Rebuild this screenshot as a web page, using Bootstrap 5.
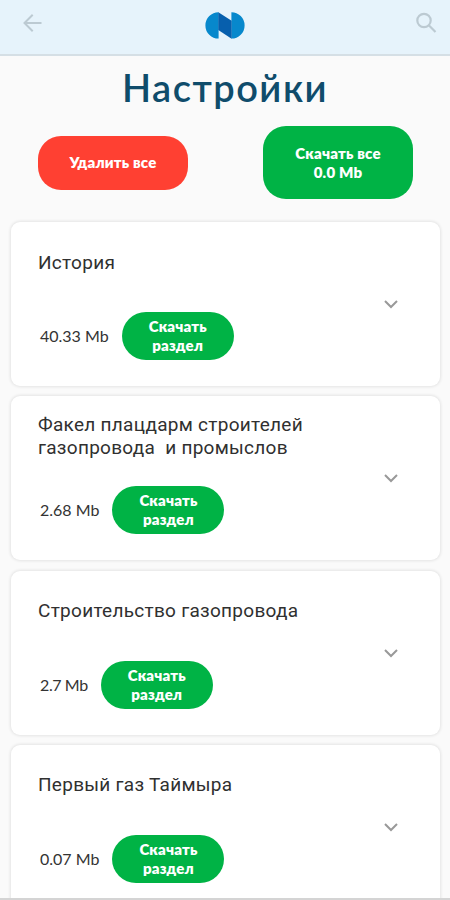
<!DOCTYPE html>
<html lang="ru">
<head>
<meta charset="utf-8">
<meta name="viewport" content="width=device-width, initial-scale=1">
<title>Настройки</title>
<link href="https://cdn.jsdelivr.net/npm/bootstrap@5.3.0/dist/css/bootstrap.min.css" rel="stylesheet">
<style>
body{background:#fafafa;font-family:Lato,"Open Sans",sans-serif;height:900px}
.app-screen{height:900px;border-bottom:2px solid #d4d4d4}
.app-bar{height:56px;background:#e6f3fb;border-bottom:2px solid #d5dfe5;padding:0 12px 0 20px}
.bar-icon{width:24px;height:24px;margin-bottom:9px;color:#bccad2}
.app-logo{width:40px;height:27px;margin-bottom:4px;margin-right:8px}
.page-title{font-size:38px;line-height:46px;font-weight:600;color:#0f4c6b;margin-top:8px;letter-spacing:1.5px}
.top-actions{height:73px;margin:16px 37px 23px 38px}
.pill{color:#fff!important;font-weight:800;font-size:15px;line-height:19px;border:0;padding:0}
.pill-all{width:150px;border-radius:23px;letter-spacing:.2px}
.pill-red{height:54px;background:#ff4032!important}
.pill-green{background:#00b345!important}
.pill-tall{height:73px}
.pill-section{width:112px;height:48px;border-radius:24px;letter-spacing:.15px}
.section-list{gap:10.3px;padding:0 10px}
.section-card{height:164px;border:0;border-radius:9px;box-shadow:0 0 3px 1px rgba(0,0,0,.09);padding:0 41px 26px 27px;margin:0 .5px 0 1px}
.section-name{font-family:Roboto,sans-serif;font-size:19px;line-height:23px;letter-spacing:.28px;color:#303030;height:62px;margin-bottom:19px;white-space:pre-line;font-weight:400}
.section-size{font-size:16px;color:#333;margin-left:2px;margin-right:13px;white-space:nowrap}
.size-short{letter-spacing:-.4px}
.chevron{width:16px;height:10px;color:#999;margin-top:26px}
</style>
</head>
<body>
<div class="app-screen overflow-hidden d-flex flex-column">
<header class="app-bar d-flex align-items-center justify-content-between flex-shrink-0">
<svg class="bar-icon" viewBox="0 0 24 24" fill="none" stroke="currentColor" stroke-width="2"><path d="M21.5 12H4.7M12.7 3.8 4.5 12l8.2 8.2"/></svg>
<svg class="app-logo" viewBox="0 0 40 27"><path d="M13.6.2A13.2 13.2 0 0 0 13.6 26.6zM26.4.2A13.2 13.2 0 0 1 26.4 26.6z" fill="#0788cc"/><path d="M13.3.2 26.6 8.8V26.7L13.3 18z" fill="#075fad"/></svg>
<svg class="bar-icon" viewBox="0 0 24 24" fill="none" stroke="currentColor" stroke-width="2.2"><circle cx="10" cy="9.5" r="6.7"/><path d="m14.8 14.3 6.7 6.7"/></svg>
</header>
<h1 class="page-title text-center mb-0 flex-shrink-0">Настройки</h1>
<div class="top-actions d-flex align-items-center justify-content-between flex-shrink-0">
<button class="btn pill pill-all pill-red">Удалить все</button>
<button class="btn pill pill-all pill-green pill-tall">Скачать все<br>0.0 Mb</button>
</div>
<main class="section-list d-flex flex-column">
<section class="card section-card flex-row align-items-end justify-content-between flex-shrink-0">
<div><h2 class="section-name d-flex align-items-center">История</h2>
<div class="d-flex align-items-center"><span class="section-size">40.33 Mb</span><button class="btn pill pill-section pill-green">Скачать<br>раздел</button></div></div>
<svg class="chevron align-self-center" viewBox="0 0 16 10" fill="none" stroke="currentColor" stroke-width="2"><path d="m2 2 6 6 6-6"/></svg>
</section>
<section class="card section-card flex-row align-items-end justify-content-between flex-shrink-0">
<div><h2 class="section-name d-flex align-items-center">Факел плацдарм строителей
газопровода&nbsp; и промыслов</h2>
<div class="d-flex align-items-center"><span class="section-size">2.68 Mb</span><button class="btn pill pill-section pill-green">Скачать<br>раздел</button></div></div>
<svg class="chevron align-self-center" viewBox="0 0 16 10" fill="none" stroke="currentColor" stroke-width="2"><path d="m2 2 6 6 6-6"/></svg>
</section>
<section class="card section-card flex-row align-items-end justify-content-between flex-shrink-0">
<div><h2 class="section-name d-flex align-items-center">Строительство газопровода</h2>
<div class="d-flex align-items-center"><span class="section-size size-short">2.7 Mb</span><button class="btn pill pill-section pill-green">Скачать<br>раздел</button></div></div>
<svg class="chevron align-self-center" viewBox="0 0 16 10" fill="none" stroke="currentColor" stroke-width="2"><path d="m2 2 6 6 6-6"/></svg>
</section>
<section class="card section-card flex-row align-items-end justify-content-between flex-shrink-0">
<div><h2 class="section-name d-flex align-items-center">Первый газ Таймыра</h2>
<div class="d-flex align-items-center"><span class="section-size">0.07 Mb</span><button class="btn pill pill-section pill-green">Скачать<br>раздел</button></div></div>
<svg class="chevron align-self-center" viewBox="0 0 16 10" fill="none" stroke="currentColor" stroke-width="2"><path d="m2 2 6 6 6-6"/></svg>
</section>
</main>
</div>
<script src="https://cdn.jsdelivr.net/npm/bootstrap@5.3.0/dist/js/bootstrap.bundle.min.js"></script>
</body>
</html>
